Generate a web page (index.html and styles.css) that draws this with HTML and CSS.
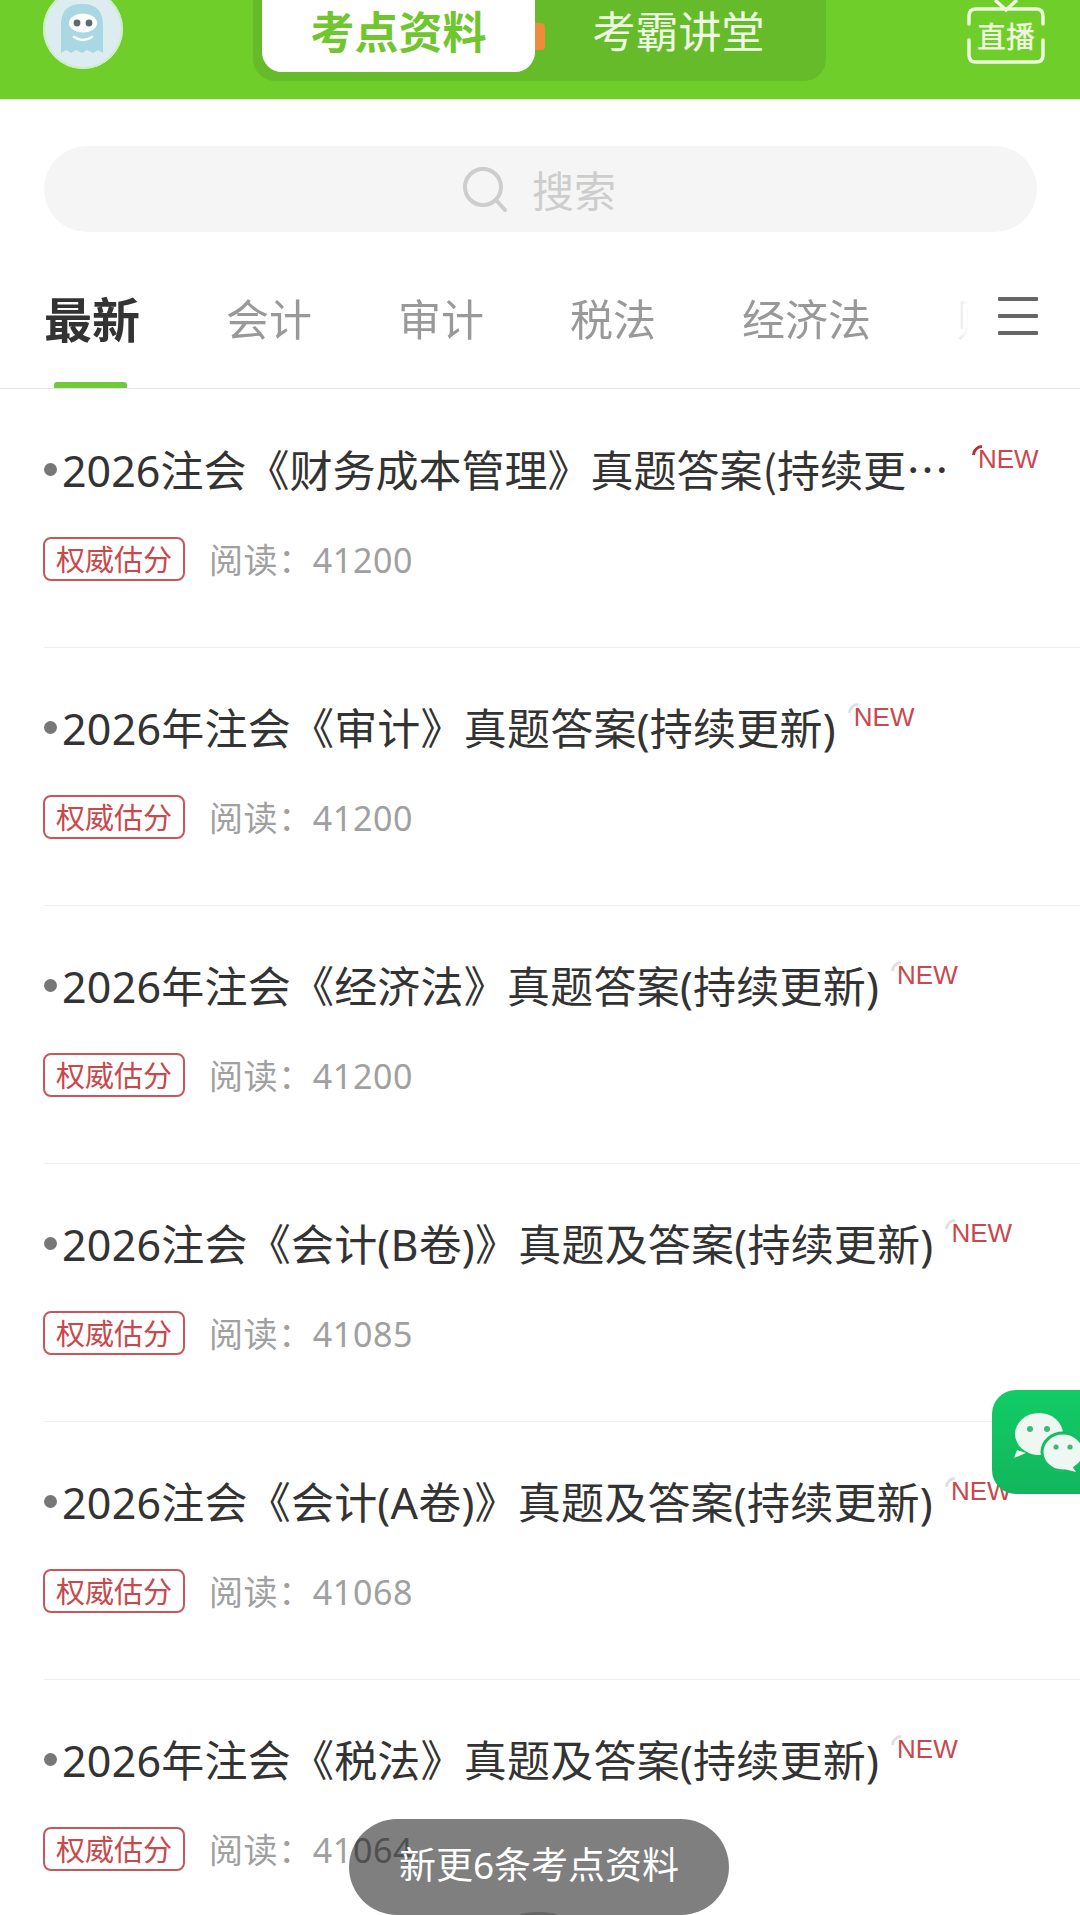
FILE: index.html
```html
<!DOCTYPE html>
<html lang="zh-CN">
<head>
  <meta charset="UTF-8">
  <meta name="viewport" content="width=device-width, initial-scale=1.0">
  <title>考点资料</title>
  <link rel="stylesheet" href="styles.css">
</head>
<body>
  <!-- Header -->
  <div class="header">
    <div class="avatar">
      <svg width="80" height="80" viewBox="0 0 80 80">
        <path d="M18 64V36C18 20 27 15 39 15S60 20 60 36V64L55 61 50 64 44 61 39 64 33 61 28 64 23 61Z" fill="#a9d7e3"/>
        <ellipse cx="40" cy="34" rx="14" ry="9.5" fill="#fff"/>
        <circle cx="34" cy="34" r="3.4" fill="#5d6b70"/>
        <circle cx="46" cy="34" r="3.4" fill="#5d6b70"/>
        <path d="M31 48Q40 54 49 48" fill="none" stroke="#fff" stroke-width="2.6" stroke-linecap="round"/>
      </svg>
    </div>
    <div class="segment">
      <div class="segment-item active">考点资料</div>
      <div class="segment-dot"></div>
      <div class="segment-item">考霸讲堂</div>
    </div>
    <svg class="live-icon" width="78" height="64" viewBox="0 0 78 64">
      <path d="M28 0L39 10 50 0" fill="none" stroke="#edf8dc" stroke-width="3.5"/>
      <path d="M2 24V16Q2 9 9 9H69Q76 9 76 16V24M76 40V55Q76 62 69 62H9Q2 62 2 55V40" fill="none" stroke="#edf8dc" stroke-width="3.5" stroke-linecap="round"/>
      <text x="39" y="48" text-anchor="middle" class="live-text">直播</text>
    </svg>
  </div>

  <!-- Search -->
  <div class="search">
    <svg width="46" height="46" viewBox="0 0 46 46">
      <circle cx="21" cy="21" r="18" fill="none" stroke="#cdcdcd" stroke-width="4"/>
      <path d="M34 34L43 44" stroke="#cdcdcd" stroke-width="4" stroke-linecap="round"/>
    </svg>
    <span>搜索</span>
  </div>

  <!-- Tabs -->
  <div class="tabs">
    <div class="tab-list">
      <div class="tab active">最新</div>
      <div class="tab">会计</div>
      <div class="tab">审计</div>
      <div class="tab">税法</div>
      <div class="tab">经济法</div>
      <div class="tab">财管</div>
    </div>
    <div class="menu">
      <span></span>
      <span></span>
      <span></span>
    </div>
  </div>

  <!-- List -->
  <div class="list">
    <div class="item">
      <div class="item-head">
        <i class="bullet"></i>
        <div class="item-title long"><span class="num">2026</span>注会《财务成本管理》真题答案(持续更新)</div>
        <div class="new wide">NEW</div>
      </div>
      <div class="item-meta">
        <span class="tag">权威估分</span>
        <span class="reads">阅读：41200</span>
      </div>
    </div>
    <div class="item">
      <div class="item-head">
        <i class="bullet"></i>
        <div class="item-title">2026年注会《审计》真题答案(持续更新)</div>
        <div class="new">NEW</div>
      </div>
      <div class="item-meta">
        <span class="tag">权威估分</span>
        <span class="reads">阅读：41200</span>
      </div>
    </div>
    <div class="item">
      <div class="item-head">
        <i class="bullet"></i>
        <div class="item-title">2026年注会《经济法》真题答案(持续更新)</div>
        <div class="new">NEW</div>
      </div>
      <div class="item-meta">
        <span class="tag">权威估分</span>
        <span class="reads">阅读：41200</span>
      </div>
    </div>
    <div class="item">
      <div class="item-head">
        <i class="bullet"></i>
        <div class="item-title">2026注会《会计(B卷)》真题及答案(持续更新)</div>
        <div class="new">NEW</div>
      </div>
      <div class="item-meta">
        <span class="tag">权威估分</span>
        <span class="reads">阅读：41085</span>
      </div>
    </div>
    <div class="item">
      <div class="item-head">
        <i class="bullet"></i>
        <div class="item-title">2026注会《会计(A卷)》真题及答案(持续更新)</div>
        <div class="new">NEW</div>
      </div>
      <div class="item-meta">
        <span class="tag">权威估分</span>
        <span class="reads">阅读：41068</span>
      </div>
    </div>
    <div class="item">
      <div class="item-head">
        <i class="bullet"></i>
        <div class="item-title">2026年注会《税法》真题及答案(持续更新)</div>
        <div class="new">NEW</div>
      </div>
      <div class="item-meta">
        <span class="tag">权威估分</span>
        <span class="reads">阅读：41064</span>
      </div>
    </div>
  </div>

  <!-- Floating WeChat button -->
  <div class="wechat">
    <svg width="88" height="104" viewBox="0 0 88 104">
      <path d="M25 60L22 68 34 63Z" fill="#eef7f1"/>
      <ellipse cx="47" cy="44" rx="24" ry="21" fill="#eef7f1"/>
      <ellipse cx="71" cy="62" rx="21" ry="19" fill="#eef7f1" stroke="#14bd62" stroke-width="3"/>
      <path d="M80 76L84 82 72 79Z" fill="#eef7f1"/>
      <circle cx="38" cy="39" r="3" fill="#3fb97a"/>
      <circle cx="55" cy="39" r="3" fill="#3fb97a"/>
      <circle cx="64" cy="57" r="2.6" fill="#3fb97a"/>
      <circle cx="78" cy="57" r="2.6" fill="#3fb97a"/>
    </svg>
  </div>

  <!-- Toast -->
  <div class="toast">新更6条考点资料</div>
</body>
</html>
```

FILE: styles.css
```css
html, body {
  margin: 0;
  padding: 0;
}
body {
  position: relative;
  width: 1080px;
  height: 1915px;
  overflow: hidden;
  background-color: #fff;
  font-family: "Noto Sans", "Noto Sans CJK SC", sans-serif;
}
.header {
  display: flex;
  align-items: flex-start;
  height: 100px;
  padding: 0 35px 0 43px;
  box-sizing: border-box;
  overflow: hidden;
  background-color: #70ce2b;
  border-bottom: 1px solid #d9f0c6;
}
.avatar {
  flex: none;
  width: 80px;
  height: 80px;
  margin-top: -11px;
  border-radius: 50%;
  background-color: #dcecef;
  box-shadow: inset 0 0 0 2px #cdeec4;
}
.segment {
  position: relative;
  display: flex;
  flex: none;
  width: 573px;
  height: 91px;
  margin-top: -10px;
  margin-left: 130px;
  padding: 0 9px 9px;
  box-sizing: border-box;
  border-radius: 0 0 22px 22px;
  background-color: #65bb29;
}
.segment-item {
  flex: 1;
  padding-left: 5px;
  text-align: center;
  font-size: 43px;
  line-height: 84px;
  color: #eef8e2;
}
.segment-item.active {
  flex: none;
  width: 273px;
  padding-left: 0;
  border-radius: 0 0 20px 20px;
  background-color: #fff;
  font-weight: 700;
  font-size: 44px;
  color: #71c52f;
}
.segment-dot {
  position: absolute;
  left: 282px;
  top: 33px;
  width: 10px;
  height: 27px;
  border-radius: 0 4px 4px 0;
  background-color: #f08a3c;
}
.live-icon {
  flex: none;
  margin-left: auto;
}
.live-text {
  font-size: 29px;
  font-weight: 500;
  fill: #edf8dc;
}
.search {
  display: flex;
  justify-content: center;
  align-items: center;
  gap: 24px;
  height: 86px;
  margin: 46px 43px 0 44px;
  padding-right: 3px;
  border-radius: 43px;
  background-color: #f5f5f5;
  font-size: 42px;
  color: #cdcdcd;
}
.search span {
  padding-bottom: 2px;
}
.tabs {
  display: flex;
  align-items: flex-start;
  height: 157px;
  padding: 57px 42px 0 44px;
  box-sizing: border-box;
  border-bottom: 1px solid #e6e6e6;
}
.tab-list {
  display: flex;
  flex: 1;
  align-items: flex-start;
  gap: 86px;
  height: 99px;
  overflow: hidden;
  -webkit-mask-image: linear-gradient(to right, #000 880px, transparent 925px);
  mask-image: linear-gradient(to right, #000 880px, transparent 925px);
}
.tab {
  position: relative;
  flex: none;
  height: 62px;
  font-size: 43px;
  line-height: 62px;
  color: #999;
}
.tab.active {
  font-size: 48px;
  font-weight: 700;
  color: #333;
}
.tab.active::after {
  content: "";
  position: absolute;
  left: 10px;
  right: 13px;
  bottom: -37px;
  height: 6px;
  border-radius: 3px 3px 0 0;
  background-color: #70c93a;
}
.menu {
  display: flex;
  flex: none;
  flex-direction: column;
  justify-content: space-between;
  width: 40px;
  height: 38px;
  margin-top: 8px;
}
.menu span {
  height: 4px;
  border-radius: 1px;
  background-color: #666;
}
.list {
  margin-top: 1px;
}
.item {
  height: 258px;
  margin-left: 44px;
  padding-top: 49px;
  box-sizing: border-box;
  border-bottom: 1px solid #efefef;
}
.item-head {
  display: flex;
  align-items: center;
  height: 60px;
}
.bullet {
  flex: none;
  width: 13px;
  height: 13px;
  margin-right: 5px;
  border-radius: 50%;
  background-color: #777;
}
.item-title {
  flex: none;
  margin-top: 4px;
  font-size: 43px;
  letter-spacing: 0.22px;
  line-height: 60px;
  white-space: nowrap;
  color: #333;
}
.item-title.long {
  width: 890px;
  margin-top: 0;
  overflow: hidden;
  text-overflow: ellipsis;
  font-family: "Noto Sans CJK SC", sans-serif;
  letter-spacing: 0;
}
.num {
  font-family: "Noto Sans", sans-serif;
}
.new {
  position: relative;
  flex: none;
  margin-left: 18px;
  margin-bottom: 20px;
  font-family: "Liberation Sans", sans-serif;
  font-size: 26px;
  line-height: 30px;
  color: #c9484e;
}
.new.wide {
  margin-left: 26px;
}
.new::before {
  content: "";
  position: absolute;
  left: -6px;
  top: 1px;
  width: 20px;
  height: 20px;
  box-sizing: border-box;
  border: 3px solid transparent;
  border-top-color: #e0e0e0;
  border-radius: 50%;
  transform: rotate(-45deg);
}
.new.wide::before {
  border-top-color: #b5313a;
}
.item-meta {
  display: flex;
  align-items: center;
  gap: 24px;
  margin-top: 36px;
  margin-left: -1px;
}
.tag {
  box-sizing: border-box;
  width: 142px;
  height: 44px;
  border: 2px solid #c8565a;
  border-radius: 8px;
  text-align: center;
  font-size: 29px;
  line-height: 42px;
  color: #c8484c;
}
.reads {
  padding-top: 3px;
  font-size: 34px;
  letter-spacing: 0.6px;
  line-height: 44px;
  color: #a0a0a0;
}
.wechat {
  position: absolute;
  right: 0;
  top: 1390px;
  width: 88px;
  height: 104px;
  border-radius: 24px 0 0 24px;
  background: linear-gradient(#11cc66, #12b65c);
}
.toast {
  position: absolute;
  left: 349px;
  top: 1819px;
  width: 380px;
  height: 96px;
  border-radius: 48px;
  background-color: rgba(0, 0, 0, 0.5);
  text-align: center;
  font-size: 37px;
  line-height: 92px;
  color: #fff;
}
.toast::after {
  content: "";
  position: absolute;
  left: 171px;
  bottom: 0;
  width: 37px;
  height: 3px;
  border-radius: 50% 50% 0 0 / 100% 100% 0 0;
  background-color: #666;
}
```
